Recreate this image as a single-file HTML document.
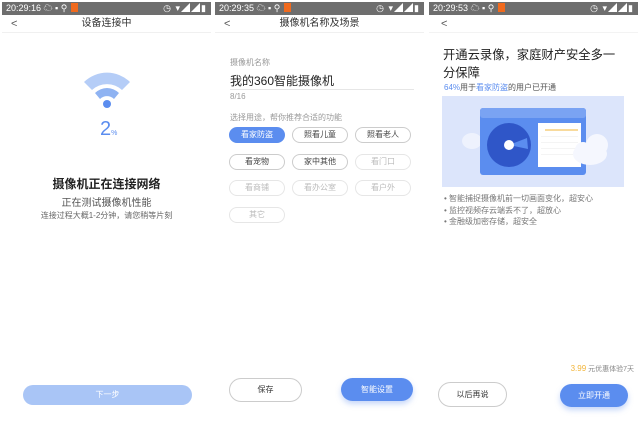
<!DOCTYPE html>
<html><head><meta charset="utf-8"><style>
*{margin:0;padding:0;box-sizing:border-box}
body{width:640px;height:425px;background:#fff;position:relative;overflow:hidden;font-family:"Liberation Sans","Noto Sans CJK SC",sans-serif;color:#333}
.p{position:absolute;top:0;height:425px;background:#fff}
.sb{position:absolute;left:0;top:2px;width:100%;height:13px;background:#6e6e6e;color:#fff;font-size:9px;line-height:13px;padding-left:4px}
.sb .o{display:inline-block;width:7px;height:9px;background:#f06a1e;vertical-align:-1px;margin-left:4px}
.sb .r{position:absolute;right:4px;top:0;letter-spacing:1px}
.nav{position:absolute;left:0;top:15px;width:100%;height:18px;border-bottom:1px solid #f0f0f0;text-align:center;font-size:10px;line-height:18px;color:#333}
.nav .b{position:absolute;left:9px;top:0;font-size:11px;color:#555}
.t{position:absolute;white-space:nowrap}
.chip{position:absolute;width:56px;height:16px;border:1px solid #ccc;border-radius:8px;font-size:8px;line-height:14px;text-align:center;color:#444}
.chip.d{border-color:#e6e6e6;color:#bbb}
.chip.a{background:#5b8def;border-color:#5b8def;color:#fff}
.btn{position:absolute;border-radius:13px;font-size:8px;text-align:center}
</style></head><body>

<!-- panel 1 -->
<div class="p" style="left:2px;width:209px">
<div class="sb">20:29:16 ☁ ▪ ⚲<span class="o"></span><span class="r">◷ ▾◢◢▮</span></div>
<div class="nav"><span class="b">&lt;</span>设备连接中</div>
<svg style="position:absolute;left:81px;top:69px" width="48" height="40" viewBox="0 0 48 40">
<path d="M1 13 A33 33 0 0 1 47 13 L39 21 A22 22 0 0 0 9 21Z" fill="#b5cdf7"/>
<path d="M12 24 A17 17 0 0 1 36 24 L31 30 A10 10 0 0 0 17 30Z" fill="#8fb3f2"/>
<circle cx="24" cy="35" r="4" fill="#5b8def"/>
</svg>
<div class="t" style="left:98px;top:118px;font-size:20px;color:#5b8def">2<span style="font-size:7px">%</span></div>
<div class="t" style="left:0;width:209px;text-align:center;top:175px;font-size:12px;font-weight:bold;color:#222">摄像机正在连接网络</div>
<div class="t" style="left:0;width:209px;text-align:center;top:194px;font-size:10px;color:#555">正在测试摄像机性能</div>
<div class="t" style="left:0;width:209px;text-align:center;top:210px;font-size:8px;color:#666">连接过程大概1-2分钟，请您稍等片刻</div>
<div class="btn" style="left:21px;top:385px;width:169px;height:20px;background:#a9c5f6;color:#fff;line-height:20px;border-radius:10px">下一步</div>
</div>

<!-- panel 2 -->
<div class="p" style="left:215px;width:209px">
<div class="sb">20:29:35 ☁ ▪ ⚲<span class="o"></span><span class="r">◷ ▾◢◢▮</span></div>
<div class="nav"><span class="b">&lt;</span>摄像机名称及场景</div>
<div class="t" style="left:15px;top:57px;font-size:8px;color:#999">摄像机名称</div>
<div class="t" style="left:15px;top:72px;font-size:12px;color:#222">我的360智能摄像机</div>
<div style="position:absolute;left:15px;top:89px;width:184px;border-top:1px solid #e6e6e6"></div>
<div class="t" style="left:15px;top:92px;font-size:8px;color:#999">8/16</div>
<div class="t" style="left:15px;top:112px;font-size:8px;color:#999">选择用途，帮你推荐合适的功能</div>
<div class="chip a" style="left:14px;top:127px">看家防盗</div>
<div class="chip" style="left:77px;top:127px">照看儿童</div>
<div class="chip" style="left:140px;top:127px">照看老人</div>
<div class="chip" style="left:14px;top:154px">看宠物</div>
<div class="chip" style="left:77px;top:154px">家中其他</div>
<div class="chip d" style="left:140px;top:154px">看门口</div>
<div class="chip d" style="left:14px;top:180px">看商铺</div>
<div class="chip d" style="left:77px;top:180px">看办公室</div>
<div class="chip d" style="left:140px;top:180px">看户外</div>
<div class="chip d" style="left:14px;top:207px">其它</div>
<div class="btn" style="left:14px;top:378px;width:73px;height:24px;border:1px solid #ccc;line-height:22px;color:#333;border-radius:12px">保存</div>
<div class="btn" style="left:126px;top:378px;width:72px;height:23px;background:#5b8def;color:#fff;line-height:23px;border-radius:12px;box-shadow:0 3px 6px rgba(91,141,239,.35)">智能设置</div>
</div>

<!-- panel 3 -->
<div class="p" style="left:429px;width:209px">
<div class="sb">20:29:53 ☁ ▪ ⚲<span class="o"></span><span class="r">◷ ▾◢◢▮</span></div>
<div class="nav" style="border-bottom-color:#f3f3f3"><span class="b" style="left:12px">&lt;</span></div>
<div class="t" style="left:14px;top:46px;font-size:12.3px;line-height:18px;color:#222">开通云录像，家庭财产安全多一<br>分保障</div>
<div class="t" style="left:15px;top:82px;font-size:8px;color:#555"><span style="color:#5b8def">64%</span>用于<span style="color:#5b8def">看家防盗</span>的用户已开通</div>
<svg style="position:absolute;left:13px;top:96px" width="182" height="91" viewBox="0 0 182 91">
<rect width="182" height="91" fill="#dce5fb"/>
<ellipse cx="30" cy="45" rx="10" ry="8" fill="#eef2fd"/>
<rect x="38" y="12" width="106" height="67" rx="3" fill="#5b8def"/>
<rect x="38" y="12" width="106" height="10" rx="3" fill="#7aa3f3"/>
<circle cx="67" cy="49" r="22" fill="#2f56c8"/>
<path d="M67 49 L85 42 L86 53 Z" fill="#5b8def"/>
<circle cx="67" cy="49" r="5" fill="#fff"/>
<rect x="96" y="27" width="43" height="44" fill="#fff"/>
<line x1="103" y1="34" x2="136" y2="34" stroke="#f2b53a" stroke-width="1"/>
<g fill="#f4f4f4"><rect x="99" y="40" width="37" height="1"/><rect x="99" y="46" width="37" height="1"/><rect x="99" y="52" width="37" height="1"/><rect x="99" y="58" width="37" height="1"/></g>
<ellipse cx="148" cy="58" rx="17" ry="11" fill="#f5f7fe"/>
<circle cx="155" cy="49" r="11" fill="#f5f7fe"/>
<circle cx="141" cy="54" r="8" fill="#f5f7fe"/>
</svg>
<div class="t" style="left:15px;top:193px;font-size:8px;line-height:11.5px;color:#777">• 智能捕捉摄像机前一切画面变化，超安心<br>• 监控视频存云端丢不了，超放心<br>• 金融级加密存储，超安全</div>
<div class="t" style="right:4px;top:364px;font-size:7px;color:#888"><span style="color:#f2b53a;font-size:8px">3.99</span> 元优惠体验7天</div>
<div class="btn" style="left:9px;top:382px;width:69px;height:25px;border:1px solid #ccc;line-height:23px;color:#333;border-radius:13px">以后再说</div>
<div class="btn" style="left:131px;top:384px;width:68px;height:23px;background:#5b8def;color:#fff;line-height:23px;border-radius:12px;box-shadow:0 3px 6px rgba(91,141,239,.35)">立即开通</div>
</div>
</body></html>
